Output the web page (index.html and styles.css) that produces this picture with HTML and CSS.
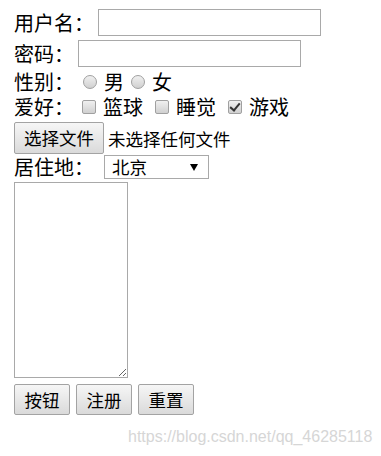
FILE: index.html
```html
<!DOCTYPE html>
<html lang="zh-CN">
<head>
    <meta charset="UTF-8">
    <meta name="viewport" content="width=device-width, initial-scale=1.0">
    <title>表单</title>
    <link rel="stylesheet" href="styles.css">
</head>
<body>
    <form class="form">
        <div class="row row-text">
            <span>用户名：</span>
            <input type="text" class="text-input">
        </div>
        <div class="row row-text">
            <span>密码：</span>
            <input type="password" class="text-input">
        </div>
        <div class="row row-radio">
            <span class="choice-label">性别：</span>
            <input type="radio" name="sex" class="radio">
            <span class="radio-text">男</span>
            <input type="radio" name="sex" class="radio">
            <span class="radio-text">女</span>
        </div>
        <div class="row row-check">
            <span class="choice-label">爱好：</span>
            <input type="checkbox" class="check">
            <span class="check-text">篮球</span>
            <input type="checkbox" class="check">
            <span class="check-text">睡觉</span>
            <input type="checkbox" class="check" checked>
            <span class="check-text">游戏</span>
        </div>
        <div class="row row-file">
            <button type="button" class="btn file-btn">选择文件</button>
            <span class="file-name">未选择任何文件</span>
        </div>
        <div class="row row-select">
            <span>居住地：</span>
            <div class="select-wrap">
                <select class="city">
                    <option>北京</option>
                    <option>上海</option>
                    <option>广州</option>
                </select>
            </div>
        </div>
        <textarea class="note"></textarea>
        <div class="row row-buttons">
            <button type="button" class="btn">按钮</button>
            <button type="submit" class="btn">注册</button>
            <button type="reset" class="btn">重置</button>
        </div>
    </form>

    <div class="watermark">https://blog.csdn.net/qq_46285118</div>
</body>
</html>
```

FILE: styles.css
```css
* {
    box-sizing: border-box;
}

body {
    margin: 0;
    background-color: #fff;
    color: #000;
    font-family: "Noto Sans CJK SC", sans-serif;
    font-size: 20px;
}

.form {
    padding: 7px 0 0 14px;
}

.row {
    display: flex;
    align-items: center;
}

.row-text {
    height: 31px;
    line-height: 31px;
}

.text-input {
    width: 223px;
    height: 27px;
    margin: 0 0 0 4px;
    border: 1px solid #a9a9a9;
    padding: 2px 3px;
    font-size: 17px;
}

.row-radio,
.row-check {
    height: 25px;
    line-height: 25px;
}

.choice-label {
    margin-right: 9px;
}

.radio,
.check {
    appearance: none;
    margin: 0 7px 0 0;
    border: 1px solid #a0a0a0;
    background: linear-gradient(#f0f0f0, #d0d0d0);
}

.radio {
    width: 14px;
    height: 14px;
    border-radius: 50%;
}

.radio-text {
    margin-right: 7px;
}

.check {
    position: relative;
    width: 14px;
    height: 14px;
    margin-left: -1px;
    border-radius: 2px;
}

.check:checked::after {
    content: "";
    position: absolute;
    left: 3px;
    top: 0px;
    width: 4px;
    height: 8px;
    border-right: 2px solid #333;
    border-bottom: 2px solid #333;
    transform: rotate(40deg);
}

.check-text {
    margin-right: 13px;
}

.btn {
    height: 31px;
    padding: 0 9.5px;
    border: 1px solid #a3a3a3;
    border-radius: 2px;
    background: linear-gradient(#f6f6f6, #dadada);
    color: #000;
    font-family: "Noto Sans CJK SC", sans-serif;
    font-size: 17.5px;
    line-height: 1;
}

.row-file {
    margin-top: 3px;
}

.file-btn {
    width: 90px;
    height: 32px;
    padding: 0;
}

.file-name {
    margin-left: 4px;
    font-size: 17.5px;
}

.row-select {
    margin-top: 1px;
    height: 24px;
    line-height: 24px;
}

.select-wrap {
    position: relative;
    margin-left: 10px;
}

.select-wrap::after {
    content: "";
    position: absolute;
    right: 11px;
    top: 9px;
    border-left: 4px solid transparent;
    border-right: 4px solid transparent;
    border-top: 7px solid #000;
    pointer-events: none;
}

.city {
    appearance: none;
    display: block;
    width: 105px;
    height: 24px;
    border: 1px solid #a9a9a9;
    border-radius: 0;
    padding: 0 0 0 7px;
    background-color: #fff;
    color: #000;
    font-family: "Noto Sans CJK SC", sans-serif;
    font-size: 17.5px;
    line-height: 22px;
}

.note {
    display: block;
    width: 114px;
    height: 196px;
    margin-top: 3px;
    border: 1px solid #a9a9a9;
}

.row-buttons {
    margin-top: 6px;
    gap: 6px;
}

.watermark {
    position: absolute;
    left: 128px;
    top: 428px;
    color: #d6d6d6;
    font-family: "Liberation Sans", Arial, sans-serif;
    font-size: 16px;
}
```
